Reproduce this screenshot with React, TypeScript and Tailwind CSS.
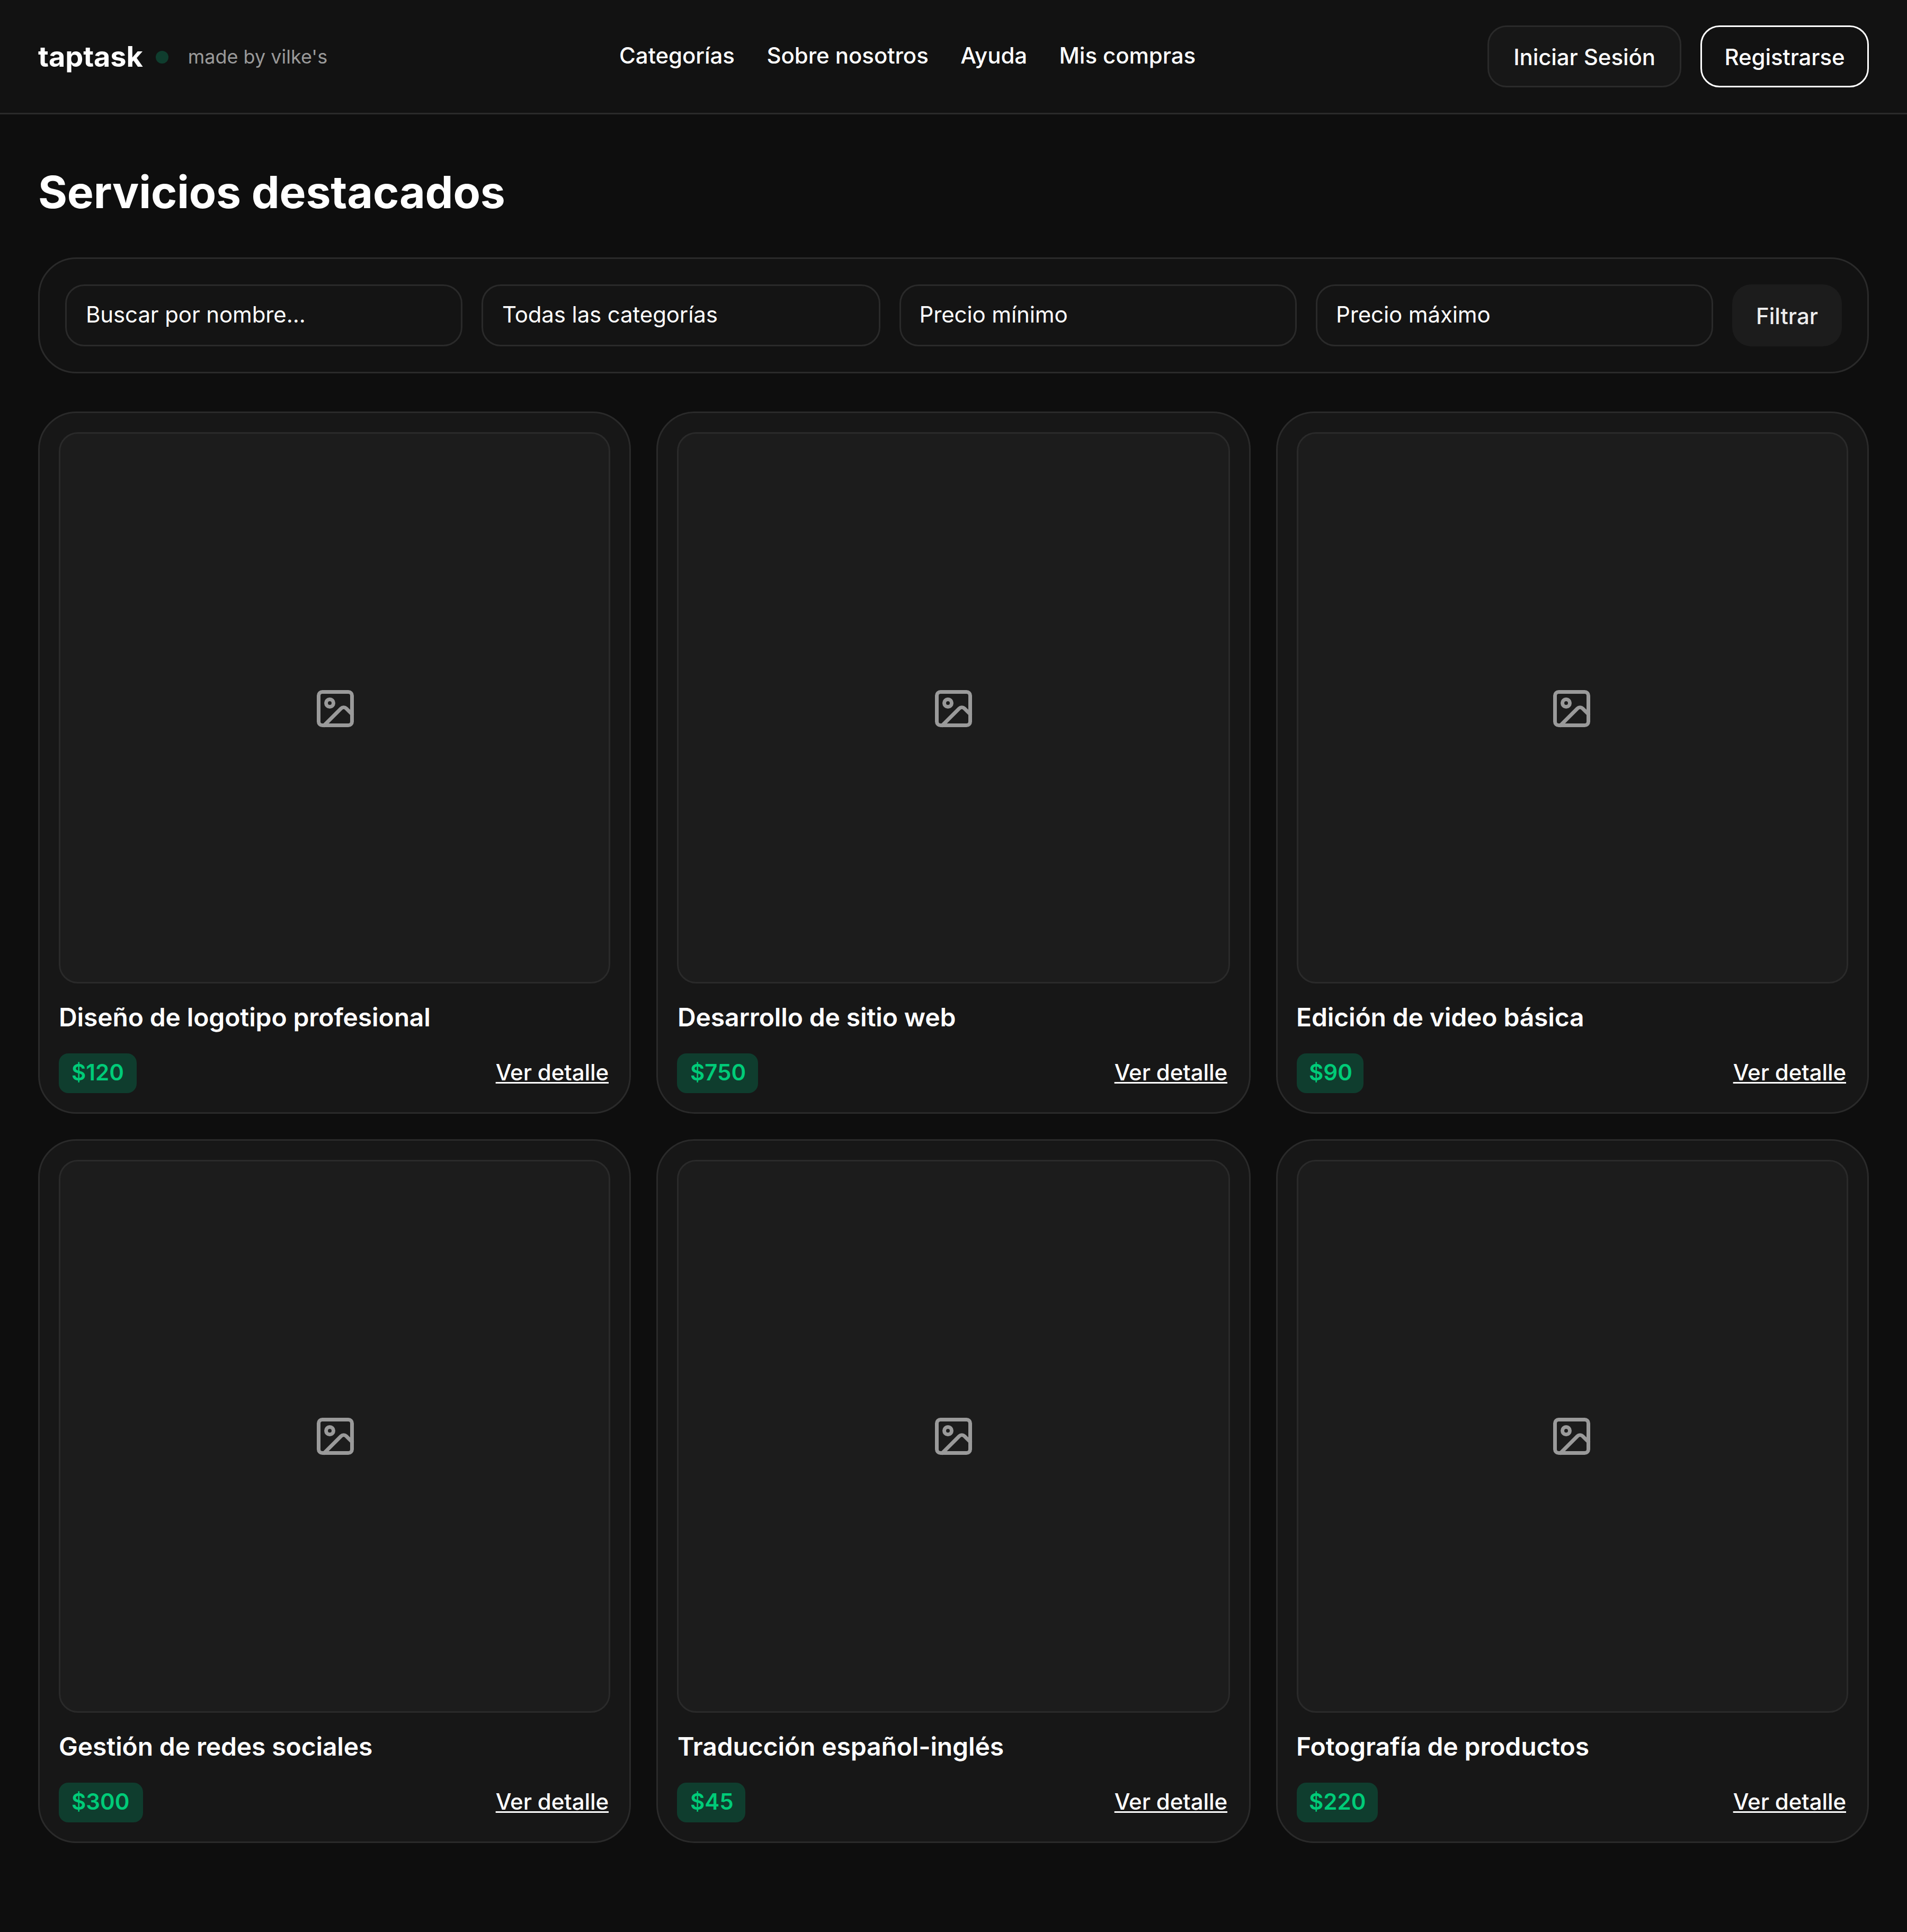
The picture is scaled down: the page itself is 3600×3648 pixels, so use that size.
import React from "react";
import { Image } from "lucide-react";

type Service = {
  title: string;
  price: string;
  /** Width of the price badge. */
  badge: string;
};

const services: Service[][] = [
  [
    { title: "Diseño de logotipo profesional", price: "$120", badge: "w-[147px]" },
    { title: "Desarrollo de sitio web", price: "$750", badge: "w-[153px]" },
    { title: "Edición de video básica", price: "$90", badge: "w-[126px]" },
  ],
  [
    { title: "Gestión de redes sociales", price: "$300", badge: "w-[159px]" },
    { title: "Traducción español-inglés", price: "$45", badge: "w-[129px]" },
    { title: "Fotografía de productos", price: "$220", badge: "w-[153px]" },
  ],
];

const links = ["Categorías", "Sobre nosotros", "Ayuda", "Mis compras"];

const fields = [
  { label: "Buscar por nombre...", pad: "pl-[36px]" },
  { label: "Todas las categorías", pad: "pl-[36px]" },
  { label: "Precio mínimo", pad: "pl-[34.5px]" },
  { label: "Precio máximo", pad: "pl-[35px]" },
];

const rowStyles = [
  { height: "h-[1326px]", icon: "pt-[3px]" },
  { height: "h-[1329px]", icon: "pt-0" },
];

const columnStyles = [
  { icon: "pl-[3px]", title: "ml-0", price: "pl-[24px]", link: "mr-[3px]" },
  { icon: "pl-0", title: "ml-px", price: "pl-[25px]", link: "mr-[5px]" },
  { icon: "pr-[3px]", title: "-ml-px", price: "pl-[23px]", link: "mr-[4px]" },
];

function Header() {
  return (
    <header className="flex h-[216px] items-center justify-between border-b-[3px] border-[#2a2a2a] bg-[#121212] px-[72px]">
      <div className="flex items-center">
        <span className="text-[54px] leading-[66px] font-bold tracking-[-0.1px]">taptask</span>
        <span className="mt-[3px] ml-[24px] size-[24px] rounded-full bg-[#0f3d2e]" />
        <span className="mt-[2px] ml-[37px] text-[36px] leading-[45px] text-[#9a9a9a]">made by vilke's</span>
      </div>
      <nav className="mb-[4px] flex gap-[60.5px] text-[42px] leading-[51px] font-medium tracking-[-0.06px]">
        {links.map((l) => (
          <a key={l}>{l}</a>
        ))}
      </nav>
      <div className="flex gap-[36px] text-[42px] leading-[51px] font-medium tracking-[-0.1px]">
        <button className="h-[117px] w-[366px] rounded-[36px] border-[3px] border-[#2a2a2a] bg-[#171717] pt-[2px]">
          Iniciar Sesión
        </button>
        <button className="h-[117px] w-[318px] rounded-[36px] border-[3px] border-white pt-[2px]">Registrarse</button>
      </div>
    </header>
  );
}

function Filters() {
  return (
    <div className="mt-[72px] grid grid-cols-[750px_753px_750px_750px_207px] gap-x-[36px] rounded-[72px] border-[3px] border-[#2a2a2a] bg-[#121212] py-[48px] pl-[48px]">
      {fields.map((f) => (
        <div
          key={f.label}
          className={`flex h-[117px] items-center rounded-[36px] border-[3px] border-[#2a2a2a] bg-[#141414] pb-[4px] text-[42px] leading-[51px] tracking-[-0.12px] ${f.pad}`}
        >
          {f.label}
        </div>
      ))}
      <button className="h-[117px] rounded-[36px] bg-[#1c1c1c] pt-[2px] text-[42px] leading-[51px] font-medium text-[#ededed]">
        Filtrar
      </button>
    </div>
  );
}

function Card({ service, row, column }: { service: Service; row: number; column: number }) {
  const { title, price, badge } = service;
  const col = columnStyles[column];
  return (
    <article className="flex flex-col rounded-[72px] border-[3px] border-[#2a2a2a] bg-[#171717] p-[36px]">
      <div
        className={`flex min-h-0 flex-1 items-center justify-center rounded-[36px] border-[3px] border-[#2a2a2a] bg-[#1c1c1c] ${rowStyles[row].icon} ${col.icon}`}
      >
        <Image className="size-[84px] text-[#9a9a9a]" />
      </div>
      <h3
        className={`mt-[35px] text-[48px] leading-[57px] font-semibold tracking-[-0.13px] whitespace-nowrap ${col.title}`}
      >
        {title}
      </h3>
      <div className="mt-[40px] flex items-start justify-between text-[42px] leading-[51px]">
        <span className={`h-[75px] rounded-[18px] bg-[#0f3d2e] pt-[10px] font-semibold text-[#00cb78] ${badge} ${col.price}`}>
          {price}
        </span>
        <a
          className={`mt-[10px] font-medium tracking-[-0.1px] underline decoration-[3px] underline-offset-[3px] ${col.link}`}
        >
          Ver detalle
        </a>
      </div>
    </article>
  );
}

export default function App() {
  return (
    <div className="h-[3648px] w-[3600px] overflow-hidden bg-[#0e0e0e] font-['Inter',sans-serif] text-white">
      <Header />
      <main className="px-[72px] pt-[96px]">
        <h1 className="text-[84px] leading-[102px] font-bold tracking-[-0.16px]">Servicios destacados</h1>
        <Filters />
        <div className="mt-[72px] flex flex-col gap-[48px]">
          {services.map((group, row) => (
            <section
              key={row}
              className={`grid grid-cols-[1119px_1122px_1119px] gap-[48px] ${rowStyles[row].height}`}
            >
              {group.map((s, column) => (
                <Card key={s.title} service={s} row={row} column={column} />
              ))}
            </section>
          ))}
        </div>
      </main>
    </div>
  );
}
